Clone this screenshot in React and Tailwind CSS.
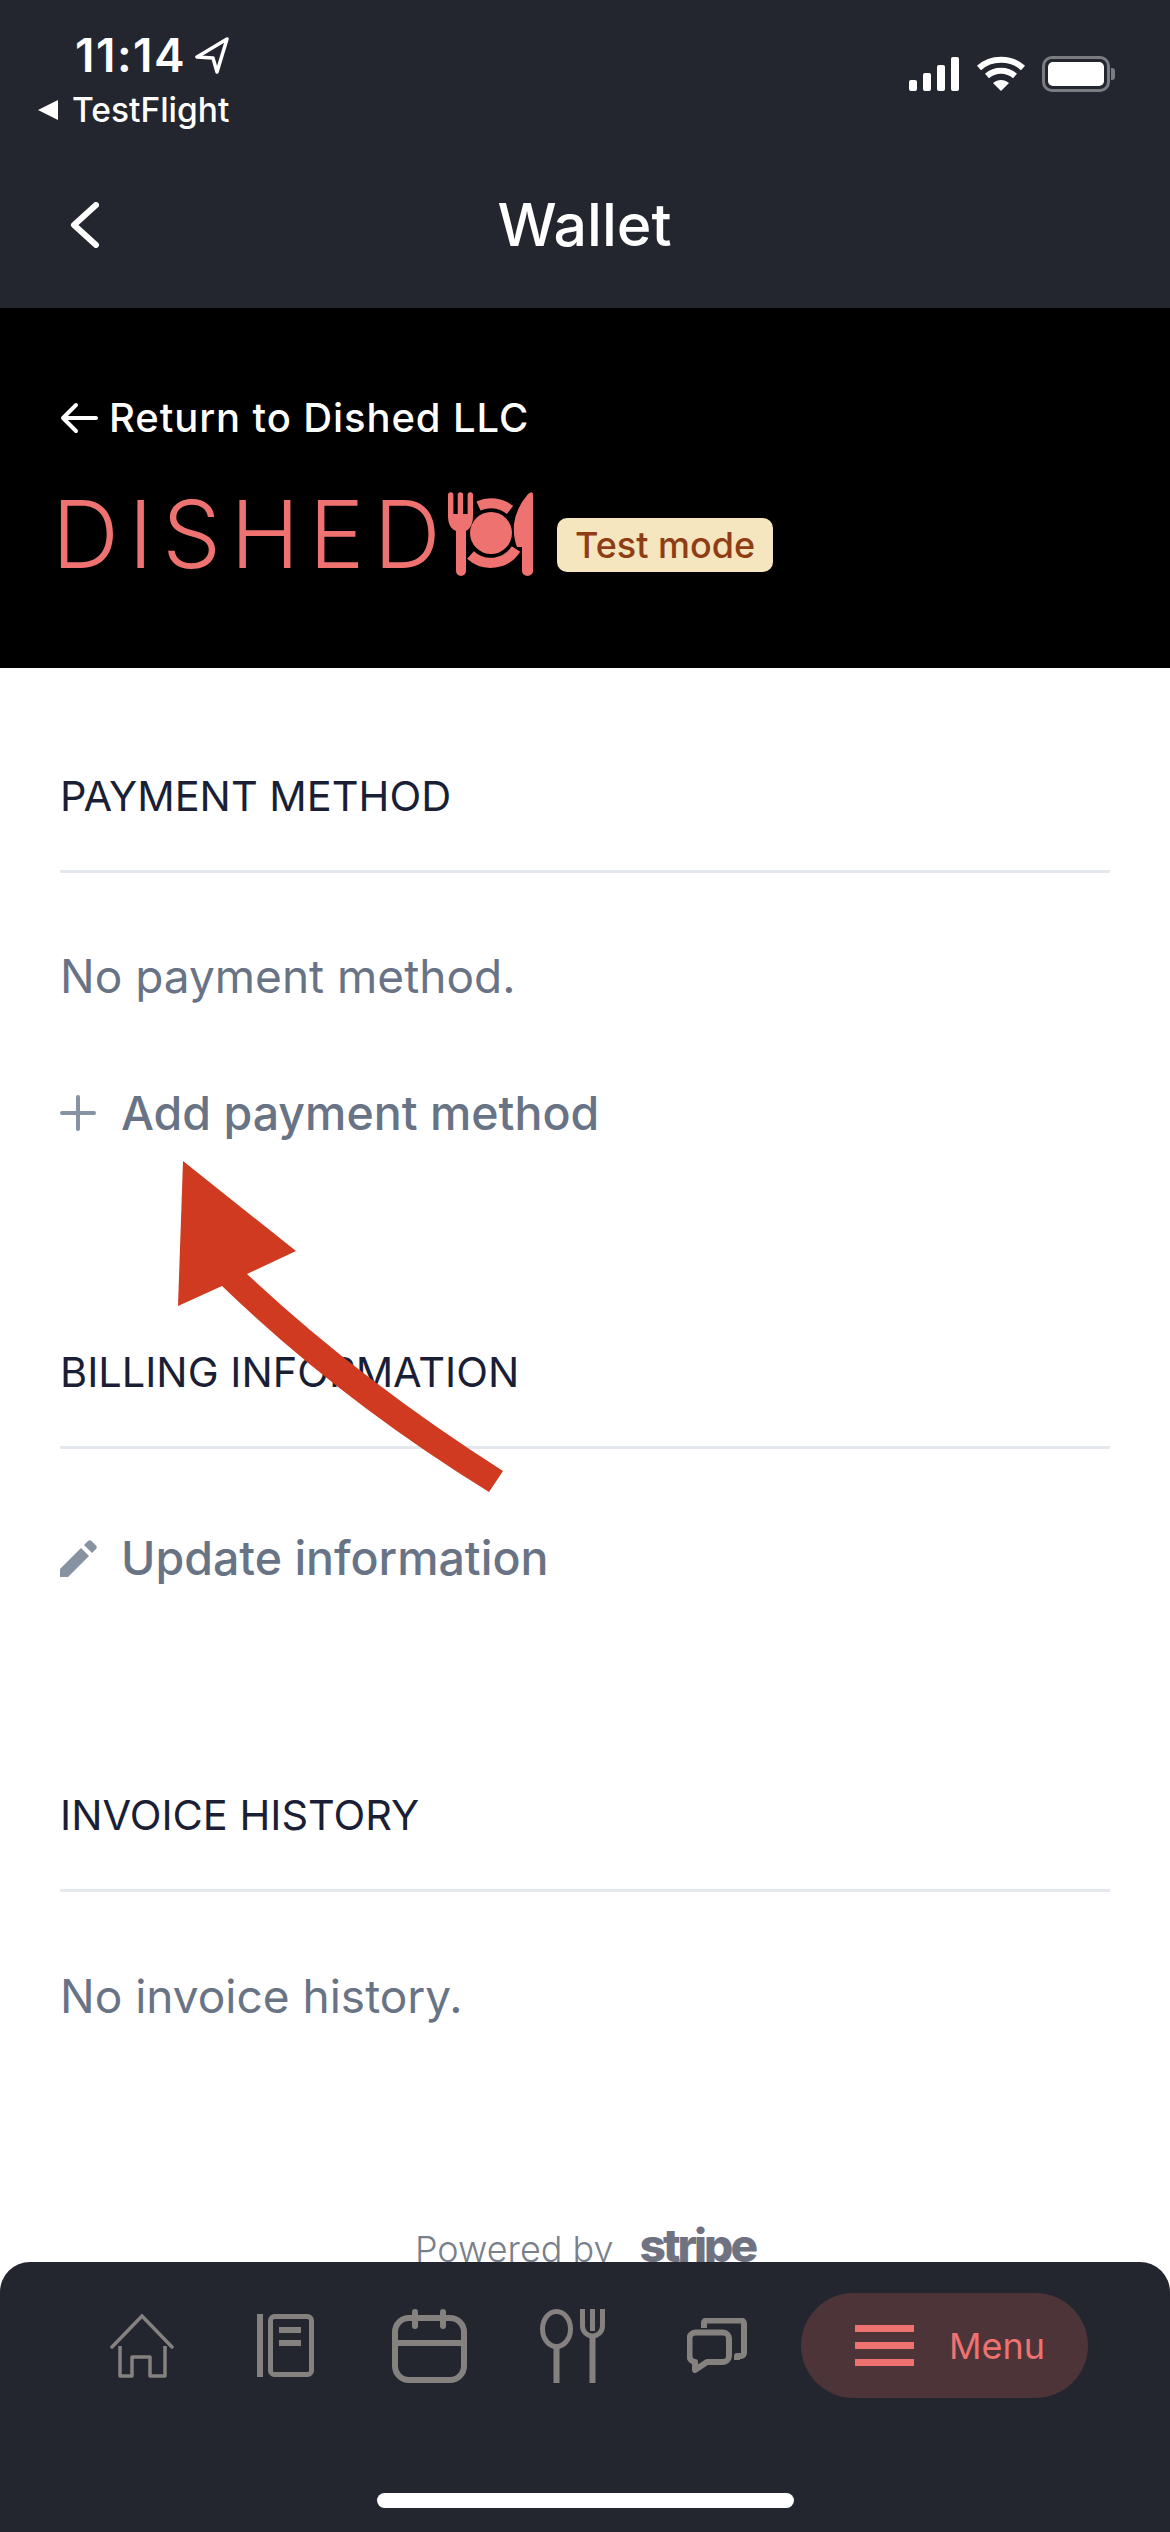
import React from "react";

const Section = ({ title, children }) => (
  <section className="px-[60px]">
    <h2 className="text-[41.5px] leading-[48px] text-[#1a1f36] font-normal pb-[50px] border-b-[3px] border-[#e3e8ee]">
      {title}
    </h2>
    {children}
  </section>
);

const ActionRow = ({ icon, label, className }) => (
  <div className={`flex items-center gap-[24px] h-[60px] ${className}`}>
    <div className="w-[37px] flex justify-start">{icon}</div>
    <span className="text-[46.5px] leading-[60px] font-medium text-[#697386]">{label}</span>
  </div>
);

const PlateLogo = () => (
  <svg width="85" height="84" viewBox="0 0 85 84" fill="#ee7270">
    <path d="M0 3a2.7 2.7 0 0 1 5.4 0V22H9.7V3a2.7 2.7 0 0 1 5.4 0V22H19.6V3a2.7 2.7 0 0 1 5.4 0V24C25 32 22 37 18 39V79a5 5 0 0 1-10 0V39C3 37 0 32 0 24z" />
    <circle cx="43" cy="41" r="21" />
    <path d="M30.5 14A30 30 0 0 1 62 18" fill="none" stroke="#ee7270" strokeWidth="10" />
    <path d="M22.5 63A30 30 0 0 0 68 57" fill="none" stroke="#ee7270" strokeWidth="10" />
    <path d="M85 3V79a5.5 5 0 0 1-11 0V55H69Q65 45 66 32Q68 16 80 2Q85-2 85 3z" />
  </svg>
);

const NavIcons = () => (
  <>
    <svg width="64" height="64" viewBox="0 0 64 64" fill="none" stroke="#85817f" strokeWidth="3.5" strokeLinecap="round">
      <path d="M2 33L32 2L62 33" />
      <path d="M10 32V62H22V43H40V62H55V32" strokeLinecap="butt" strokeLinejoin="round" />
    </svg>
    <svg width="57" height="63" viewBox="0 0 57 63" className="ml-[83px]" fill="none" stroke="#85817f" strokeWidth="5">
      <rect x="0" y="0" width="6" height="63" fill="#85817f" stroke="none" />
      <rect x="13.5" y="2.5" width="41" height="58" rx="4" />
      <rect x="22" y="13" width="22" height="6" fill="#85817f" stroke="none" />
      <rect x="22" y="26" width="22" height="6" fill="#85817f" stroke="none" />
    </svg>
    <svg width="75" height="74" viewBox="0 0 75 74" className="ml-[78px]" fill="none" stroke="#85817f" strokeWidth="6" strokeLinecap="round">
      <rect x="3" y="9" width="69" height="62" rx="14" />
      <path d="M23 3V17M51 3V17" />
      <path d="M3 34H72" strokeLinecap="butt" />
    </svg>
    <svg width="65" height="74" viewBox="0 0 65 74" className="ml-[73px]" fill="none" stroke="#85817f" strokeWidth="5">
      <ellipse cx="16.5" cy="20" rx="14" ry="17.5" />
      <path d="M16.5 38V74M52.5 27V74" strokeWidth="6" />
      <path d="M42.5 0V17a10 10 0 0 0 20 0V0M52.5 0V22" />
    </svg>
    <svg width="60" height="55" viewBox="0 0 60 55" className="ml-[82px]" fill="none" stroke="#85817f" strokeWidth="6" strokeLinejoin="round">
      <path d="M9 14.5H36a6 6 0 0 1 6 6V38a6 6 0 0 1-6 6H20L8 52V44a6 6 0 0 1-5.500-6V20.500a6 6 0 0 1 6-6z" />
      <path d="M17 10V5a2.500 2.500 0 0 1 2.500-2.500H54a3 3 0 0 1 3 3V35a3 3 0 0 1-3 3H50V42" />
    </svg>
  </>
);

export default function App() {
  return (
    <div className="relative w-[1170px] h-[2532px] flex flex-col bg-white overflow-hidden font-['Inter',sans-serif]">
      {/* status bar + title */}
      <header className="h-[308px] shrink-0 bg-[#23262f] text-white flex flex-col">
        <div className="h-[168px] flex justify-between">
          <div className="pl-[37px]">
            <div className="flex items-center pl-[38px] pt-[32px] h-[78px]">
              <span className="text-[46px] leading-[44px] font-semibold tracking-[1.5px]">11:14</span>
              <svg width="36" height="38" viewBox="0 0 36 38" className="ml-[8px]" fill="none" stroke="white" strokeWidth="3.5" strokeLinejoin="round">
                <path d="M33 3L3 21L19 22L23 36z" />
              </svg>
            </div>
            <div className="flex items-center gap-[13px] mt-[14px]">
              <svg width="22" height="20" viewBox="0 0 22 20" fill="white">
                <path d="M21 0V20L1 10z" />
              </svg>
              <span className="text-[33.5px] leading-[36px] font-medium">TestFlight</span>
            </div>
          </div>
          <div className="flex items-start gap-[16px] pt-[56px] pr-[55px]">
            <svg width="51" height="34" viewBox="0 0 51 34" fill="white" className="mt-[1px]">
              <rect x="0" y="23" width="8" height="11" rx="2" />
              <rect x="14" y="16" width="8" height="18" rx="2" />
              <rect x="28" y="8" width="8" height="26" rx="2" />
              <rect x="42" y="0" width="8" height="34" rx="2" />
            </svg>
            <svg width="50" height="36" viewBox="0 0 50 36" fill="none" stroke="white" strokeWidth="6">
              <path d="M3 12C15 1 35 1 47 12" />
              <path d="M11 20C19 13 31 13 39 20" />
              <path d="M25 35L17 27C22 23 28 23 33 27z" fill="white" stroke="none" />
            </svg>
            <div className="flex items-center">
              <div className="w-[68px] h-[36px] rounded-[10px] border-[3px] border-[#7b7c82] p-[3px]">
                <div className="w-full h-full rounded-[5px] bg-white" />
              </div>
              <div className="w-[4px] h-[12px] rounded-r-[3px] bg-[#7b7c82] ml-[1px]" />
            </div>
          </div>
        </div>
        <div className="grid grid-cols-[1fr_auto_1fr] items-center pl-[70px] h-[80px] pr-[71px] mt-[17px]">
          <svg width="29" height="46" viewBox="0 0 29 46" fill="none" stroke="white" strokeWidth="6" strokeLinecap="round" strokeLinejoin="round">
            <path d="M26 3L4 23L26 43" />
          </svg>
          <span className="text-[59px] leading-[80px] font-medium">Wallet</span>
          <span />
        </div>
      </header>

      {/* stripe portal business banner */}
      <div className="h-[360px] shrink-0 bg-black px-[60px] pt-[88px]">
        <div className="flex items-center gap-[11px] h-[44px]">
          <svg width="38" height="32" viewBox="0 0 38 32" fill="none" stroke="white" strokeWidth="4" strokeLinecap="round" strokeLinejoin="round">
            <path d="M36 16H3M16 3L3 16L16 29" />
          </svg>
          <span className="text-[40px] leading-[44px] font-medium text-white tracking-[0.9px]">Return to Dished LLC</span>
        </div>
        <div className="flex items-center mt-[52px] h-[84px]">
          <span className="w-[396px] -ml-[8px] text-[93px] leading-[84px] font-light text-[#ee7270] tracking-[9.5px] whitespace-nowrap">DISHED</span>
          <PlateLogo />
          <span className="ml-[24px] mt-[22px] h-[54px] px-[18px] rounded-[10px] bg-[#f5e6bf] text-[#8f3d15] text-[36px] leading-[54px] font-medium">
            Test mode
          </span>
        </div>
      </div>

      {/* wallet content, clipped by the nav */}
      <main className="flex-1 min-h-0 overflow-hidden pt-[104px]">
        <Section title="PAYMENT METHOD">
          <p className="text-[46px] leading-[60px] text-[#697386] mt-[73px]">No payment method.</p>
          <ActionRow
            className="mt-[77px]"
            label="Add payment method"
            icon={
              <svg width="36" height="36" viewBox="0 0 36 36" stroke="#8792a2" strokeWidth="4" strokeLinecap="round">
                <path d="M18 2V34M2 18H34" />
              </svg>
            }
          />
        </Section>
        <div className="h-[205px]" />
        <Section title="BILLING INFORMATION">
          <ActionRow
            className="mt-[79px]"
            label="Update information"
            icon={
              <svg width="37" height="37" viewBox="0 0 37 37" fill="#8792a2">
                <path d="M0 29V37H8L29 16L21 8zM24 5L32 13L36 9C37 8 37 6.500 36 5.500L31.500 1C30.500 0 29 0 28 1z" />
              </svg>
            }
          />
        </Section>
        <div className="h-[203px]" />
        <Section title="INVOICE HISTORY">
          <p className="text-[46px] leading-[60px] text-[#697386] mt-[74px]">No invoice history.</p>
        </Section>
        <div className="flex items-baseline justify-center gap-[26px] mt-[197px]">
          <span className="text-[36px] leading-[44px] font-light text-[#7a7f8c]">Powered by</span>
          <span className="text-[46px] leading-[44px] font-extrabold tracking-[-3px] text-[#6f7280]">stripe</span>
        </div>
      </main>

      {/* bottom nav */}
      <nav className="h-[270px] shrink-0 bg-[#23262f] rounded-t-[30px] pt-[31px] relative">
        <div className="flex items-center h-[105px] pl-[110px]">
          <NavIcons />
          <div className="ml-[54px] w-[287px] h-[105px] rounded-full bg-[#4d3439] flex items-center pl-[54px] gap-[35px]">
            <div className="w-[59px] flex flex-col gap-[10px]">
              <div className="h-[7px] bg-[#ee7270]" />
              <div className="h-[7px] bg-[#ee7270]" />
              <div className="h-[7px] bg-[#ee7270]" />
            </div>
            <span className="text-[36px] leading-[44px] text-[#ee7270]">Menu</span>
          </div>
        </div>
        <div className="w-[417px] h-[15px] rounded-full bg-white mx-auto mt-[95px]" />
      </nav>

      {/* annotation arrow drawn on top of the screenshot */}
      <svg className="absolute left-[170px] top-[1150px] pointer-events-none" width="345" height="350" viewBox="170 1150 345 350" fill="#d03a20">
        <path d="M183 1161L296 1251L247 1274Q360 1380 503 1471L489 1492Q340 1400 222 1286L178 1306z" />
      </svg>
    </div>
  );
}
